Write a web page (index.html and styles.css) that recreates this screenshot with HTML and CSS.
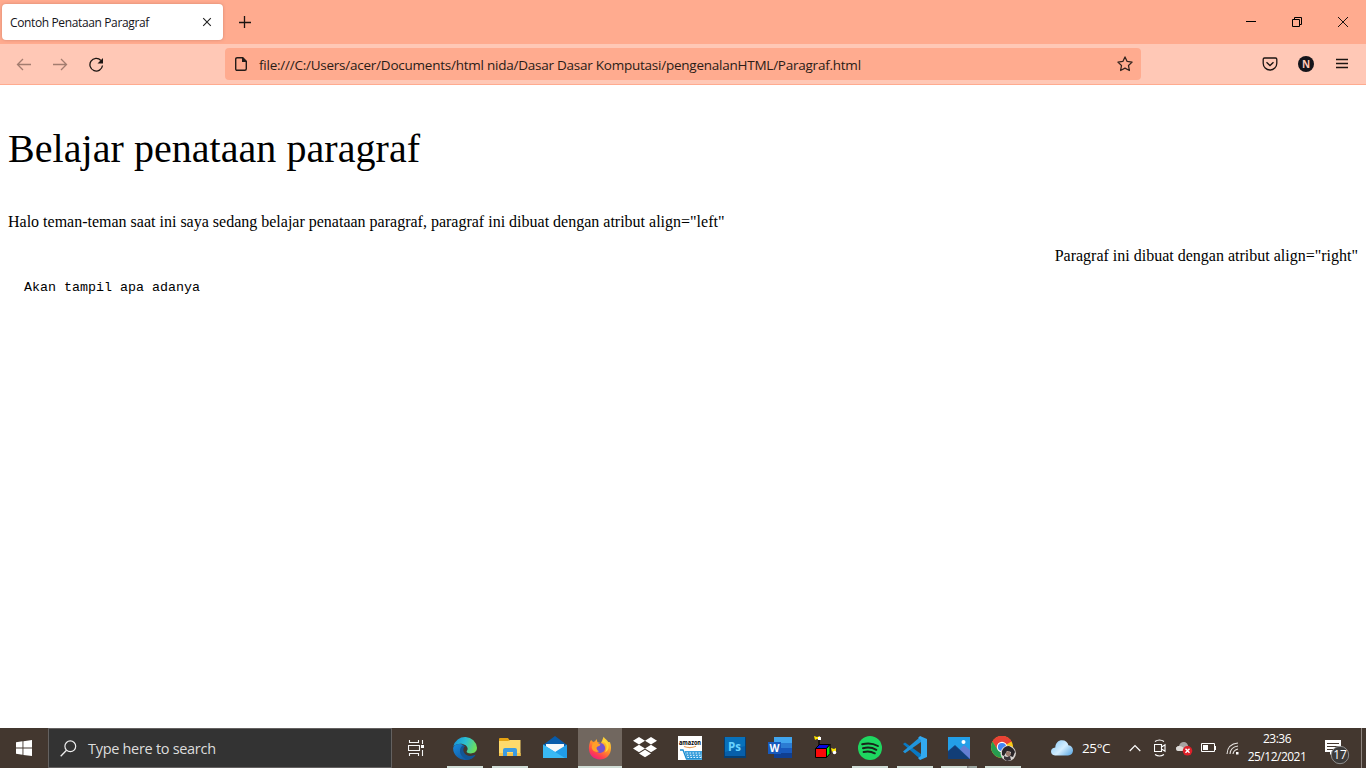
FILE: index.html
```html
<!DOCTYPE html>
<html lang="id">
<head>
<meta charset="utf-8">
<title>Contoh Penataan Paragraf</title>
<link rel="stylesheet" href="styles.css">
</head>
<body>
<div class="screen">
  <header class="tabbar">
    <div class="tab"><span class="tab-title">Contoh Penataan Paragraf</span>
      <svg class="tab-close" width="10" height="10" viewBox="0 0 10 10"><path d="M1.2 1.2l7.6 7.6M8.8 1.2L1.2 8.8" stroke="#222" stroke-width="1.1"/></svg>
    </div>
    <svg class="newtab" width="12" height="12" viewBox="0 0 12 12"><path d="M0 6.5h12M5.5 0v12" stroke="#1c1512" stroke-width="1.3"/></svg>
    <div class="window-buttons">
      <svg width="10" height="12" viewBox="0 0 10 12"><path d="M0 5.5h10" stroke="#000"/></svg>
      <svg width="10" height="12" viewBox="0 0 10 12"><path d="M.5 3.500h7v7h-7zM2.500 3.500v-2h7v7h-2" fill="none" stroke="#000"/></svg>
      <svg width="10" height="12" viewBox="0 0 10 12"><path d="M0 1l10 10M10 1L0 11" stroke="#000" stroke-width=".9"/></svg>
    </div>
  </header>
  <nav class="toolbar">
    <div class="nav-buttons">
      <svg class="dim" width="16" height="16" viewBox="0 0 16 16"><path d="M15 8.500H1.500M7 3L1.500 8.500 7 14"/></svg>
      <svg class="dim" width="16" height="16" viewBox="0 0 16 16"><path d="M1 8.500h13.500M9 3l5.500 5.500L9 14"/></svg>
      <svg width="16" height="16" viewBox="0 0 16 16"><path d="M12.900 4.500A6.300 6.300 0 1 0 14.500 9.500"/><path d="M15 2v5.500H9.500z" fill="#1c1512" stroke="none"/></svg>
    </div>
    <div class="urlbar">
      <svg width="12" height="14" viewBox="0 0 12 14"><path d="M2.200.7h5.600l3.500 3.500v7.600q0 1.500-1.500 1.500H2.200Q.7 13.300.7 11.800V2.200Q.7.7 2.200.7z" fill="none" stroke="#241b18" stroke-width="1.400"/><path d="M7 0l5 5H7z" fill="#241b18"/></svg>
      <span class="url">file:///C:/Users/acer/Documents/html nida/Dasar Dasar Komputasi/pengenalanHTML/Paragraf.html</span>
      <svg class="star" width="16" height="16" viewBox="0 0 16 16"><path d="M8 .9l2.150 4.550 4.950.65-3.600 3.450.9 4.950L8 12.100l-4.400 2.400.9-4.950L.9 6.100l4.950-.65z" fill="none" stroke="#33231d" stroke-width="1.250" stroke-linejoin="round"/></svg>
    </div>
    <div class="tools">
      <svg width="16" height="16" viewBox="0 0 16 16"><path d="M2.500 2h11q1.300 0 1.300 1.300v3.900a6.800 6.800 0 0 1-13.600 0V3.300Q1.200 2 2.500 2z"/><path d="M4.500 6.200L8 9.500l3.500-3.300"/></svg>
      <span class="avatar">N</span>
      <svg width="16" height="16" viewBox="0 0 16 16"><path d="M2 3.500h12M2 7.500h12M2 11.500h12"/></svg>
    </div>
  </nav>
  <main class="page">
    <div class="heading"><span>Belajar penataan paragraf</span></div>
    <p class="left"><span>Halo teman-teman saat ini saya sedang belajar penataan paragraf, paragraf ini dibuat dengan atribut align="left"</span></p>
    <p class="right"><span>Paragraf ini dibuat dengan atribut align="right"</span></p>
    <pre class="pre">  Akan tampil apa adanya</pre>
  </main>
  <footer class="taskbar">
    <div class="start"><svg width="16" height="16" viewBox="0 0 16 16"><path d="M0 2.300L6.500 1.300v6.300H0zM7.400 1.200L16 0v7.600H7.400zM0 8.500h6.500v6.300L0 13.800zM7.400 8.500H16V16l-8.600-1.100z" fill="#fff"/></svg></div>
    <div class="search"><svg width="17" height="17" viewBox="0 0 17 17"><circle cx="10.300" cy="6.300" r="5.400" fill="none" stroke="#eee" stroke-width="1.200"/><path d="M6.500 10.200L.7 16.200" stroke="#eee" stroke-width="1.300"/></svg><span>Type here to search</span></div>
    <div class="taskview"><svg width="17" height="16" viewBox="0 0 17 16"><path d="M1.500 0v2.500h9V0M1.500 16v-2.500h9V16M.5 5.500h11v5H.5zM14.500 0v4M14.500 10v6" fill="none" stroke="#f4f4f4" stroke-width="1.100"/><path d="M13 5h3v3h-3z" fill="#fff"/></svg></div>
    <div class="apps">
      <div class="app open"><svg width="24" height="24" viewBox="0 0 24 24">
        <defs><linearGradient id="edgeTop" x1="0" x2="1" y1=".2" y2=".5"><stop stop-color="#1591da"/><stop offset=".5" stop-color="#2cbfd1"/><stop offset="1" stop-color="#6ee05a"/></linearGradient><linearGradient id="edgeBase" x1="0" x2="1" y2="1"><stop stop-color="#178bdd"/><stop offset="1" stop-color="#114a8f"/></linearGradient></defs>
        <path d="M.3 10.500A12 12 0 0 1 24 11.800c0 4.200-3.400 5.600-6.100 5.600-3 0-4.700-1.200-4.200-2.200 1.600-1.800 1.200-4.200-1-5.900-2.800-2.200-9-2.500-12.400 1.200z" fill="url(#edgeTop)"/>
        <path d="M.1 12C1 7.700 7.200 6.900 10.700 9.200c-4.200 2.400-3.700 7.600-.2 10 3.600 2.600 8.300 2 12-.4C19.300 25 9.600 25.800 4 20.800A12 12 0 0 1 .1 12z" fill="url(#edgeBase)"/>
        <path d="M9.800 9.300c-5.300 4.500-2.800 12.200 4.700 14.400 4-.6 6.600-2.500 8-4.900-5 2.400-10.900.9-12.100-4.100-.3-1.800.5-3.600 1.600-4.100-.4-.6-1.200-1.200-2.200-1.300z" fill="#125596"/></svg></div>
      <div class="app open"><svg width="24" height="24" viewBox="0 0 24 24"><path d="M1 3q0-1 1-1h8l1.800 2.500L10 7H1z" fill="#e6a312"/><path d="M1 5h9l2-1h10.500v16H1z" fill="#ffda6b"/><path d="M1 17h21.500v3H1z" fill="#f4c34b"/><path d="M5 20v-6q0-2 2-2h10q2 0 2 2v6h-4v-4H9v4z" fill="#3c9be0"/></svg></div>
      <div class="app"><svg width="24" height="24" viewBox="0 0 24 24"><path d="M0 9L12 0l12 9-2 3H2z" fill="#075baa"/><path d="M3 8h18v8H3z" fill="#f5f7f8"/><path d="M0 8.500L12 16l12-7.500V22H0z" fill="#209ce8"/><path d="M0 22V8.500l17 10.500 5 3z" fill="#39b9f4"/></svg></div>
      <div class="app open active"><svg width="24" height="24" viewBox="0 0 24 24"><defs><linearGradient id="fox" x1=".8" y1="0" x2=".2" y2="1"><stop stop-color="#ffe43c"/><stop offset=".45" stop-color="#ff9328"/><stop offset=".75" stop-color="#ff434c"/><stop offset="1" stop-color="#ed168a"/></linearGradient></defs><path d="M2 5.800L3.100 4l2 2 2-.7L8.500 3l1 3.200L13 7l2.700-6.200c1 2.200 3.300 3 4.600 5.200L22 6.300c2 5.300 1 10.700-2.100 13.900-4.200 4.200-11.900 4.400-16 .1C.4 16.600.2 11 2 5.800z" fill="url(#fox)"/><circle cx="12" cy="12" r="5.100" fill="#7554ce"/><path d="M4.500 7.500c3-1.200 5.800-.6 8 .9-.6 1.700-2.500 1.600-3.600 2.600-1 1.100.1 3.500 2.100 4.200-3.100 2-6.800-.4-7.300-3.700z" fill="#ff9f28"/><path d="M13.500 6.500c6-1.500 6.100 6 3.300 10 3.300-1.400 5-5.200 3-9.500l-3.500-4z" fill="#ffd833"/></svg></div>
      <div class="app"><svg width="24" height="24" viewBox="0 0 24 24"><path d="M6 1l6 3.800-6 3.800-6-3.800zM18 1l6 3.800-6 3.800-6-3.800zM6 8.700l6 3.800-6 3.800-6-3.800zM18 8.700l6 3.800-6 3.800-6-3.800zM12 13.700l6 3.700-6 3.800-6-3.800z" fill="#fff"/></svg></div>
      <div class="app"><svg width="24" height="24" viewBox="0 0 24 24"><path d="M0 0h24v24H0z" fill="#fff"/><text x="1" y="9" textLength="22" lengthAdjust="spacingAndGlyphs" class="amazon-name">amazon</text><path d="M6 10.500q6 2.300 12-.2" fill="none" stroke="#e7a15c" stroke-width="1.200"/><path d="M6.500 15H24l-.5 8H9z" fill="#3a9fdc"/><path d="M2 14h3l3.500 9H24" fill="none" stroke="#198dd1" stroke-width="1.300"/><path d="M8.500 17h14.500M9 19.300h14M9.500 21.500H23" stroke="#e6f5ff" stroke-width="1" stroke-dasharray="1.500 1.500"/></svg></div>
      <div class="app"><svg width="24" height="24" viewBox="0 0 24 24"><path d="M1 1h22v21H1z" fill="#063f73"/><path d="M2 1h20v19H2z" fill="#075faa"/><path d="M2 1h20v9L2 16z" fill="#0871bb"/><text x="5" y="14.500" textLength="13" lengthAdjust="spacingAndGlyphs" class="ps-name">Ps</text></svg></div>
      <div class="app"><svg width="24" height="24" viewBox="0 0 24 24"><path d="M6 1h18v6H6z" fill="#41a5ee"/><path d="M6 7h18v5H6z" fill="#2b7cd3"/><path d="M6 12h18v5H6z" fill="#185abd"/><path d="M6 17h18v5H6z" fill="#103f91"/><path d="M0 6h13v12H0z" fill="#185abd"/><text x="1.500" y="15.500" textLength="10" lengthAdjust="spacingAndGlyphs" class="word-name">W</text></svg></div>
      <div class="app"><svg width="24" height="24" viewBox="0 0 24 24"><path d="M2.500 12.500l4-4H17l-3.500 4z" fill="#0808dc" stroke="#000"/><path d="M13.500 12.500l3.500-4v9l-3.500 4z" fill="#12e817" stroke="#000"/><path d="M2.500 12.500h11v9H2.500z" fill="#fb0909" stroke="#000"/><path d="M6 9V4" stroke="#000" stroke-width="1.200"/><path d="M1 0l3 1 3-1v4l-3-1-2 1z" fill="#ffe600"/><path d="M5 1h3v3H5z" fill="#fff"/><path d="M18 12l3 1 2-1v4l-2-1-2 1z" fill="#ffe600"/><circle cx="21.500" cy="16.500" r="1.800" fill="#fff"/></svg></div>
      <div class="app open"><svg width="24" height="24" viewBox="0 0 24 24"><circle cx="12" cy="12" r="12" fill="#1ed760"/><path d="M4.200 8.300q8.600-2.300 15.700 1.700M5 12.300q7.300-1.900 13.300 1.500M5.600 16q6-1.500 11.200 1.300" fill="none" stroke="#18251b" stroke-width="2" stroke-linecap="round"/></svg></div>
      <div class="app narrow open"><svg width="24" height="24" viewBox="0 0 24 24"><path d="M0 8l2-1.600L18 18v5.700z" fill="#0879c3"/><path d="M0 15.500l2 1.800L18 6V.2z" fill="#2195dc"/><path d="M17 0l7 3v18l-7 3-2-2 3-2V4l-3-2z" fill="#32a9ef"/></svg></div>
      <div class="app narrow open multi"><svg width="24" height="24" viewBox="0 0 24 24"><path d="M1 1h22v22H1z" fill="#239fe8"/><path d="M13 13l4-4 6 5v9H12z" fill="#657ed3"/><path d="M1 15l7-6 15 14H1z" fill="#164987"/><path d="M1 16v7h21L8 10z" fill="#123e77"/><circle cx="16.500" cy="6" r="2" fill="#fff"/></svg></div>
      <div class="app narrow open"><svg width="26" height="26" viewBox="0 0 26 26"><circle cx="12" cy="12" r="11" fill="#fbc916"/><path d="M2.500 6.500A11 11 0 0 1 21.500 6.500L12 12z" fill="#e94235"/><path d="M12 7h9.800A11 11 0 0 0 2.500 6.500L7.700 15z" fill="#e94235"/><path d="M2.500 6.500A11 11 0 0 0 12 23l5-8.500H7.500z" fill="#269d50"/><circle cx="12" cy="12" r="5.200" fill="#fff"/><circle cx="12" cy="12" r="4.100" fill="#4285f4"/><circle cx="18.200" cy="18.200" r="7.700" fill="#d6d2cf"/><path d="M12 16q2-5 7-5 5 2 6 6l-2 5-3-1 1-4-4-1-3 5-2-1z" fill="#292528"/><path d="M16 17l3-1 2 3-2 3-3-2z" fill="#9b7b6d"/><path d="M14 21l3 1 3-1 1 4-4 1-3-2z" fill="#393338"/></svg></div>
    </div>
    <div class="weather"><svg width="22" height="16" viewBox="0 0 22 16"><defs><linearGradient id="cloud" x1="0" x2="1" y2=".7"><stop stop-color="#82c4f3"/><stop offset=".6" stop-color="#d4eeff"/><stop offset="1" stop-color="#72b5e8"/></linearGradient></defs><path d="M4 15.500Q0 15 0 11.500 0 8 4.300 7.500C4.500 3 7.300.3 11 .3c3.500 0 5.800 2 6.400 5 3 .4 4.600 2.300 4.600 5 0 3-2 5.200-5 5.200z" fill="url(#cloud)"/></svg><span>25°C</span></div>
    <div class="tray">
      <svg width="12" height="8" viewBox="0 0 12 8"><path d="M.7 7L6 1.500 11.300 7" fill="none" stroke="#fff" stroke-width="1.200"/></svg>
      <svg width="12" height="18" viewBox="0 0 12 18"><path d="M.5 5.500h7v7h-7zM8 7.800l3-2v6.400l-3-2M1 2.500q4.500-3 9 0M1 15.500q4.500 3 9 0" fill="none" stroke="#fff" stroke-width="1.100"/></svg>
      <svg width="17" height="15" viewBox="0 0 17 15"><path d="M2 10Q0 9.500 0 7.500 0 5.500 3 5 4 1 8 1q3 0 4 3.500l2 5.500z" fill="#a7a4a2"/><path d="M2 10Q0 9.500 0 7.500 0 5.500 3 5q2-.5 5 2l4 3z" fill="#dedbd8"/><circle cx="11.500" cy="9.800" r="4.800" fill="#df2029"/><path d="M9.500 7.800l4 4m0-4l-4 4" stroke="#fff" stroke-width="1.400"/></svg>
      <svg width="15" height="10" viewBox="0 0 15 10"><path d="M.5.5h13v8H.5z" fill="none" stroke="#fff"/><path d="M2 2h5v5H2zM14 3h1v4h-1z" fill="#fff"/></svg>
      <svg width="13" height="13" viewBox="0 0 13 13"><path d="M1 12Q1.500 2 12 1M4 12Q4.500 5 12 4M7 12q.5-4 5-5" fill="none" stroke="#e8e4e1" stroke-width="1.100"/><path d="M10 10h2.500v2.500H10z" fill="#fff"/></svg>
    </div>
    <div class="clock"><span class="time">23:36</span><span class="date">25/12/2021</span></div>
    <div class="notice"><svg width="26" height="26" viewBox="0 0 26 26"><path d="M1 1h16v12H9l-3 3v-3H1z" fill="#fff"/><path d="M3 4.500h12M3 7.500h12M3 10.500h7" stroke="#43372f"/><circle cx="16" cy="16" r="8.700" fill="#3d3b3a" stroke="#999" stroke-width=".9"/><text x="16" y="20.200" text-anchor="middle" class="notice-count">17</text></svg></div>
  </footer>
</div>
</body>
</html>
```
FILE: styles.css
```css
* { box-sizing: border-box; }
body { margin: 0; background: #fff; }
svg { display: block; flex: none; }
.screen { width: 1366px; height: 768px; display: flex; flex-direction: column; overflow: hidden; font-family: "Open Sans", "Noto Sans", sans-serif; }
.tabbar { height: 44px; flex: none; display: flex; align-items: center; background: #ffab8f; padding-left: 2px; }
.tab { width: 221px; height: 36px; display: flex; align-items: center; justify-content: space-between; padding: 0 11px 0 8px; background: #fff; border-radius: 4px; box-shadow: 0 0 3px #a9624d80; }
.tab-title { font-size: 12px; letter-spacing: -.37px; color: #15141a; white-space: nowrap; }
.newtab { margin-left: 16px; }
.window-buttons { display: flex; gap: 36px; margin-left: auto; padding-right: 18px; }
.toolbar { height: 41px; flex: none; display: flex; align-items: center; background: #ffc8b6; border-bottom: 1px solid #ffab8f; padding-left: 16px; }
.nav-buttons, .tools { display: flex; align-items: center; gap: 20px; }
.nav-buttons svg, .tools svg { fill: none; stroke: #1c1512; stroke-width: 1.3; }
.nav-buttons .dim { stroke: #a37c6f; }
.nav-buttons { width: 209px; }
.urlbar { width: 916px; height: 32px; display: flex; align-items: center; padding: 0 8px 0 10px; border-radius: 4px; background: #ffab8f; }
.url { margin-left: 12px; padding-top: 2px; font-size: 13.5px; letter-spacing: -.24px; white-space: nowrap; color: #2a1c17; }
.star { margin-left: auto; }
.tools { margin-left: auto; padding-right: 16px; }
.avatar { width: 16px; height: 16px; border-radius: 50%; background: #15141a; color: #ffc8b6; font: bold 10px/16px "Open Sans", sans-serif; text-align: center; }
.page { flex: 1; padding: 37px 8px 0; color: #000; font-family: "Liberation Serif", serif; }
.page p, .page pre { margin: 0; }
.heading { font-size: 40px; line-height: 54px; letter-spacing: .05px; white-space: nowrap; }
.left, .right { font-size: 16px; line-height: 18px; white-space: nowrap; }
.page .left { margin-top: 37px; }
.page .right { margin-top: 16px; text-align: right; }
.page .pre { margin-top: 15px; font: 13.333px/16px "Liberation Mono", monospace; }
.taskbar { height: 40px; flex: none; display: flex; align-items: center; background: #43372f; color: #fff; }
.start { width: 48px; display: flex; justify-content: center; }
.search { width: 344px; height: 40px; display: flex; align-items: center; background: #333; border: 1px solid #646160; padding-left: 11px; gap: 11px; color: #ddd; font-size: 14.5px; letter-spacing: -.3px; }
.taskview { width: 51px; padding-left: 16px; }
.apps { display: flex; height: 40px; }
.app { width: 44px; height: 40px; margin-right: 1px; display: flex; align-items: center; justify-content: center; border-bottom: 2px solid transparent; padding-top: 2px; }
.app.narrow { margin-right: 0; }
.open { background: linear-gradient(#d0ddd6, #d0ddd6) center bottom / 36px 2px no-repeat border-box; }
.open.active { background: linear-gradient(#d0ddd6, #d0ddd6) bottom / 44px 2px no-repeat border-box, #71675f; }
.open.multi { background: linear-gradient(90deg, #d0ddd6 26px, #777 26px, #9aa49f 29px) center bottom / 36px 2px no-repeat border-box; }
.amazon-name { font: bold 6.5px "Open Sans", sans-serif; }
.ps-name { font: bold 12px "Open Sans", sans-serif; fill: #69d3ff; }
.word-name { font: bold 10.5px "Open Sans", sans-serif; fill: #fff; }
.weather { display: flex; align-items: center; gap: 9px; margin-left: 26px; width: 78px; font-size: 13.5px; letter-spacing: -.4px; }
.tray { display: flex; align-items: center; gap: 10px; width: 115px; }
.tray svg:nth-child(2) { margin-left: 3px; }
.tray svg:nth-child(4) { margin-left: -2px; }
.clock { width: 66px; display: flex; flex-direction: column; align-items: center; font-size: 12px; line-height: 18px; letter-spacing: -.5px; }
.notice { margin-left: auto; height: 40px; display: flex; align-items: center; padding: 7px 11px 0 0; border-right: 1px solid #8e8580; margin-right: 4px; }
.notice-count { font: 12px "Open Sans", sans-serif; fill: #fff; }
```
